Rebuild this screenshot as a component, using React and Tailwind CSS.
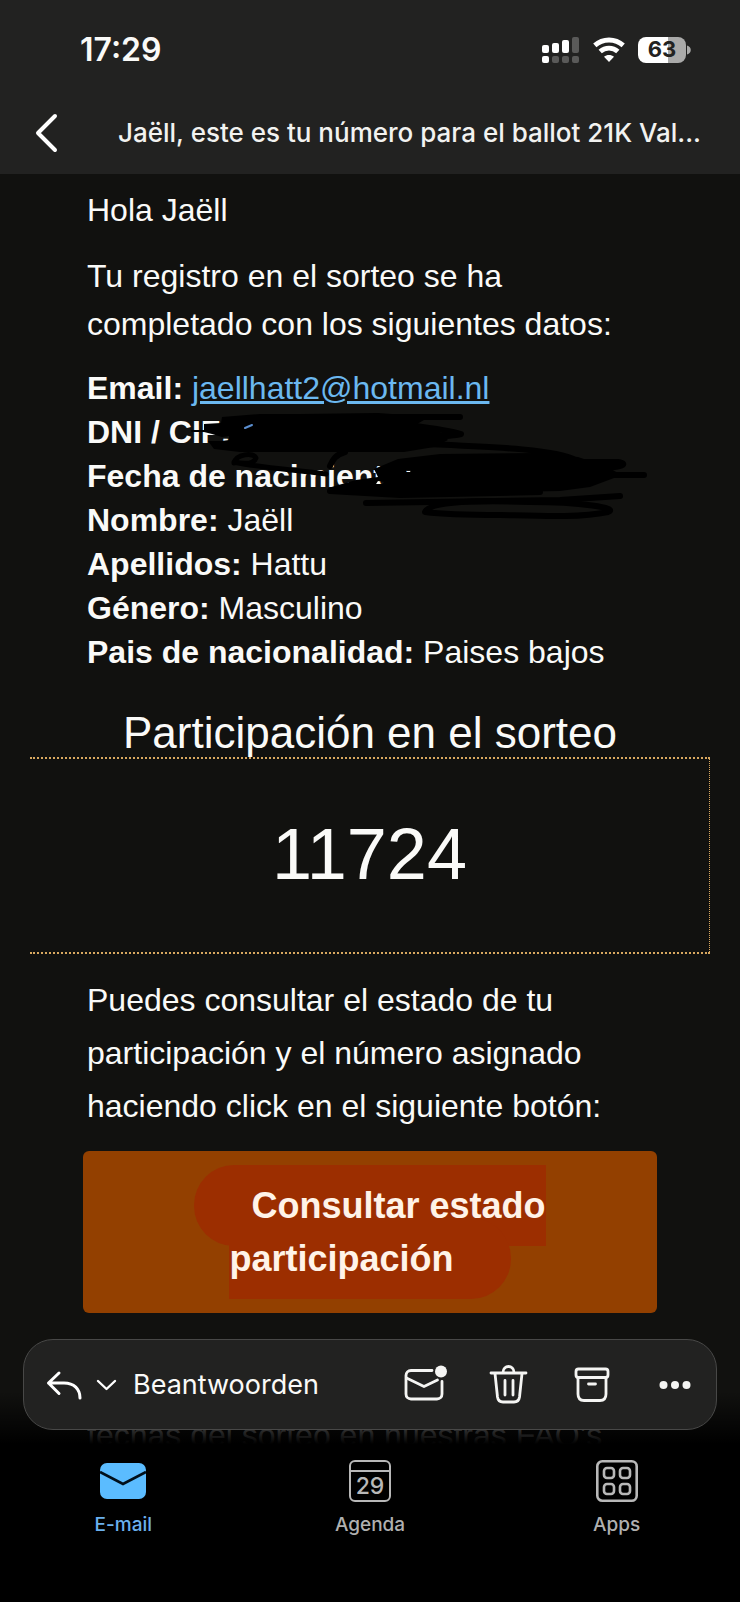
import { clsx } from 'clsx';

const details = [
  { label: 'Email:', value: 'jaellhatt2@hotmail.nl', href: 'mailto:jaellhatt2@hotmail.nl' },
  { label: 'DNI / CIF:', value: '' },
  { label: 'Fecha de nacimiento:', value: '' },
  { label: 'Nombre:', value: 'Jaëll' },
  { label: 'Apellidos:', value: 'Hattu' },
  { label: 'Género:', value: 'Masculino' },
  { label: 'Pais de nacionalidad:', value: 'Paises bajos' },
];

const SignalIcon = () => (
  <svg width="38" height="28" viewBox="0 0 38 28" fill="#fff">
    <rect x="0" y="9" width="7" height="8" rx="2" />
    <rect x="10" y="7" width="7" height="10" rx="2" />
    <rect x="20" y="4" width="7" height="13" rx="2" />
    <rect x="30" y="1" width="7" height="16" rx="2" fill="#5a5a59" />
    <rect x="0" y="20" width="7" height="7" rx="2" />
    <rect x="10" y="20" width="7" height="7" rx="2" fill="#5a5a59" />
    <rect x="20" y="20" width="7" height="7" rx="2" fill="#5a5a59" />
    <rect x="30" y="20" width="7" height="7" rx="2" fill="#5a5a59" />
  </svg>
);

const WifiIcon = () => (
  <svg width="32" height="25" viewBox="0 0 32 25" fill="none" stroke="#fff" strokeWidth="4.8">
    <path d="M1.800 8.400C9.800 1.200 22.200 1.200 30.200 8.400" />
    <path d="M7.200 14.600C12.200 10 19.800 10 24.800 14.600" />
    <path d="M16 25L11 19.800C13.800 17.300 18.200 17.300 21 19.800Z" fill="#fff" stroke="none" />
  </svg>
);

const BatteryIcon = () => (
  <div className="flex items-center gap-px">
    <div className="flex h-[26px] w-12 items-center justify-center rounded-lg bg-linear-to-r from-white from-63% to-[#aaaaa9] to-63% text-[22px] font-bold text-[#222221]">
      63
    </div>
    <svg width="4" height="10" viewBox="0 0 4 10">
      <path d="M0 0.5C5 2 5 8 0 9.5Z" fill="#aaaaa9" />
    </svg>
  </div>
);

// Pen strokes that hide the private rows
const Scribble = () => (
  <svg className="pointer-events-none absolute top-[42px] left-[101px]" width="470" height="112" viewBox="188 408 470 112" fill="none" stroke="#000" strokeWidth="6" strokeLinecap="round" strokeLinejoin="round">
    <path d="M204 424L221 423L222 417L260 414L300 414L378 413L420 416L424 420L412 427L440 432L448 440L434 447L404 452L240 452L214 449L208 441L222 441L229 440L229 436L222 437L212 434L204 432Z" fill="#000" stroke="none" />
    <path d="M192 431L210 431" strokeWidth="2" />
    <path d="M350 417L460 417M400 424C430 428 448 430 461 434C450 437 430 436 410 437" />
    <path d="M234 463C236 454 254 452 256 458C254 464 244 464 234 462C260 468 300 470 326 474" strokeWidth="5" />
    <path d="M345 452C334 455 332 462 330 466" />
    <path d="M425 444C500 447 560 450 575 460" />
    <path d="M374 469L398 459L440 454L540 453L578 457L605 466L622 475L590 487L560 491L400 494L352 491L328 493L328 488L356 480L378 477ZM378 481L384 482L382 484L376 484ZM406 470L411 470L410 472L406 472Z" fill="#000" fillRule="evenodd" stroke="none" />
    <path d="M560 462L618 462C630 464 620 468 600 468M600 475L644 475" />
    <path d="M330 491L400 495L540 492M366 503L560 500L620 496" />
    <path d="M425 512C430 502 470 500 530 502C580 502 620 508 608 512C580 518 540 516 500 515C470 515 440 514 425 512Z" />
    <path d="M245 428L252 425" stroke="#5b8fd0" strokeWidth="2" />
  </svg>
);

const StatusBar = () => (
  <div className="flex h-[91px] items-center justify-between pt-2 pr-[49px] pl-20">
    <span className="text-[32px] font-semibold">17:29</span>
    <div className="flex items-center gap-[13px]">
      <SignalIcon />
      <WifiIcon />
      <BatteryIcon />
    </div>
  </div>
);

const MailHeader = () => (
  <header className="shrink-0 bg-[#222221]">
    <StatusBar />
    <div className="flex h-[83px] items-center pr-5 pl-8">
      <button aria-label="Terug" className="w-[86px] shrink-0">
        <svg width="28" height="42" viewBox="0 0 28 42" fill="none" stroke="#fff" strokeWidth="4" strokeLinecap="round" strokeLinejoin="round">
          <path d="M23 4L6 21L23 38" />
        </svg>
      </button>
      <h1 className="text-[26px] font-medium whitespace-nowrap text-[#f2f2f0]">
        Jaëll, este es tu número para el ballot 21K Val...
      </h1>
    </div>
  </header>
);

const MailBody = () => (
  <main className="min-h-0 flex-1 overflow-hidden font-['Liberation_Sans',Arial,sans-serif] text-[32px]">
    <div className="px-[87px] pt-3">
      <p className="leading-[48px]">Hola Jaëll</p>
      <p className="mt-[18px] leading-[48px]">
        Tu registro en el sorteo se ha <br />completado con los siguientes datos:
      </p>
      <div className="relative mt-[18px] leading-[44px]">
        {details.map((row) => (
          <p key={row.label} className="whitespace-nowrap">
            <strong>{row.label}</strong>{' '}
            {row.href ? <a href={row.href} className="text-[#6bb8f0] underline">{row.value}</a> : row.value}
          </p>
        ))}
        <Scribble />
      </div>
    </div>
    <section className="mt-[35px] px-[30px] text-center">
      <h2 className="text-[44px] leading-[48px]">Participación en el sorteo</h2>
      <p className="flex h-[197px] items-center justify-center border-y-2 border-r border-dotted border-[#d9a860] pb-1 text-[72px]">
        11724
      </p>
    </section>
    <div className="px-[83px] pt-5">
      <p className="px-1 leading-[53px]">
        Puedes consultar el estado de tu <br />participación y el número asignado <br />haciendo click en el siguiente botón:
      </p>
      <a href="#estado" className="mt-[18px] block rounded-md bg-[#934000] py-7 text-center text-[36px] leading-[53px] font-bold text-[#fff3e8]">
        <span className="rounded-[40px] bg-[#9c2e00] px-[57px] py-5">
          Consultar estado <br />participación
        </span>
      </a>
      <p className="mt-24 px-1 leading-[53px] whitespace-nowrap text-[#aaa]">fechas del sorteo en nuestras FAQ’s</p>
    </div>
  </main>
);

const ActionBar = () => (
  <div className="mx-[23px] flex h-[91px] items-center rounded-[30px] border border-[#484847] bg-[#222221] pr-5 pl-[22px]">
    <button className="flex items-center text-[27px]">
      <svg width="38" height="32" viewBox="0 0 38 32" fill="none" stroke="#fff" strokeWidth="3" strokeLinecap="round" strokeLinejoin="round">
        <path d="M13 4L2.500 14L13 24.500M2.500 14H18C28 14 34 20 34 29" />
      </svg>
      <svg className="ml-3" width="22" height="14" viewBox="0 0 22 14" fill="none" stroke="#fff" strokeWidth="2.400" strokeLinecap="round" strokeLinejoin="round">
        <path d="M2 3L10.500 11L19 3" />
      </svg>
      <span className="ml-[15px] pt-0.5">Beantwoorden</span>
    </button>
    <div className="ml-auto flex items-center gap-[41px]">
      <button aria-label="Markeren als ongelezen">
        <svg width="44" height="42" viewBox="0 0 44 42" fill="none" stroke="#f5f5f3" strokeWidth="2.800" strokeLinecap="round" strokeLinejoin="round">
          <path d="M29 6.500H8C5 6.500 3 8.500 3 11.500V30C3 33 5 35 8 35H34C37 35 39 33 39 30V17.500" />
          <path d="M3.500 14L21 22.500L34.500 16" />
          <circle cx="38" cy="7.500" r="6" fill="#f5f5f3" stroke="none" />
        </svg>
      </button>
      <button aria-label="Verwijderen">
        <svg width="42" height="42" viewBox="0 0 42 42" fill="none" stroke="#f5f5f3" strokeWidth="2.800" strokeLinecap="round" strokeLinejoin="round">
          <path d="M3 9H38M15 8.500C15 0.500 26 0.500 26 8.500" />
          <path d="M7 9.500L9.500 33C10 36.500 12 38 15 38H26C29 38 31 36.500 31.500 33L34 9.500M17 16.500V31M25 16.500V31" />
        </svg>
      </button>
      <button aria-label="Archiveren">
        <svg width="42" height="42" viewBox="0 0 42 42" fill="none" stroke="#f5f5f3" strokeWidth="2.800" strokeLinecap="round" strokeLinejoin="round">
          <rect x="5" y="5" width="32" height="8.500" rx="2.500" />
          <path d="M7 14V30C7 34.500 9 36.500 13 36.500H29C33 36.500 35 34.500 35 30V14M17.500 20H24.500" />
        </svg>
      </button>
      <button aria-label="Meer">
        <svg width="42" height="42" viewBox="0 0 42 42" fill="#f5f5f3">
          <circle cx="9.500" cy="21" r="4" />
          <circle cx="21" cy="21" r="4" />
          <circle cx="32.500" cy="21" r="4" />
        </svg>
      </button>
    </div>
  </div>
);

const MailTabIcon = () => (
  <svg width="46" height="44" viewBox="0 0 46 44">
    <rect x="0" y="4" width="46" height="36" rx="7" fill="#5bbcff" />
    <path d="M0 13L23 25L46 13" fill="none" stroke="#00101c" strokeWidth="2.600" />
  </svg>
);

const AgendaTabIcon = () => (
  <div className="flex h-[42px] w-[42px] flex-col rounded-md border-2 border-[#b8b8b8]">
    <span className="h-2.5 border-b-2 border-[#b8b8b8]" />
    <span className="flex flex-1 items-center justify-center text-[23px] leading-none text-[#b8b8b8]">29</span>
  </div>
);

const AppsTabIcon = () => (
  <svg width="44" height="44" viewBox="0 0 44 44" fill="none" stroke="#b8b8b8" strokeWidth="2.600">
    <rect x="2.300" y="2.300" width="39.400" height="39.400" rx="5" />
    <rect x="9" y="9" width="10" height="10" rx="3" />
    <rect x="25" y="9" width="10" height="10" rx="3" />
    <rect x="9" y="25" width="10" height="10" rx="3" />
    <rect x="25" y="25" width="10" height="10" rx="3" />
  </svg>
);

const tabs = [
  { name: 'E-mail', icon: <MailTabIcon />, active: true },
  { name: 'Agenda', icon: <AgendaTabIcon /> },
  { name: 'Apps', icon: <AppsTabIcon /> },
];

const TabBar = () => (
  <nav className="grid h-[158px] grid-cols-3 bg-black pt-[15px]">
    {tabs.map((tab) => (
      <a
        key={tab.name}
        href={`#${tab.name}`}
        className={clsx('flex flex-col items-center gap-2.5 text-[19px] leading-6 font-medium', tab.active ? 'text-[#6bb0ee]' : 'text-[#b0b0b0]')}
      >
        <span className="flex h-11 items-center">{tab.icon}</span>
        {tab.name}
      </a>
    ))}
  </nav>
);

const App = () => {
  return (
    <div className="flex h-screen flex-col bg-[#11110f] font-[Inter,sans-serif] text-[#fafaf8]">
      <MailHeader />
      <MailBody />
      {/* The dock floats over the end of the message */}
      <footer className="relative -mt-[105px] shrink-0">
        <div className="bg-linear-to-b from-transparent from-50% to-black pb-3.5">
          <ActionBar />
        </div>
        <TabBar />
      </footer>
    </div>
  );
};

export default App;
